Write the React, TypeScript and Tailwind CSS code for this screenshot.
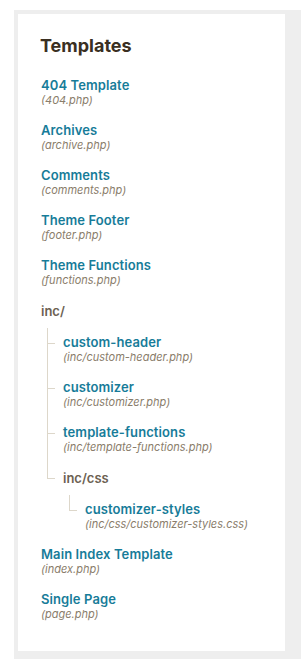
import React from "react";

type Node =
  | { kind: "file"; title: string; file: string }
  | { kind: "dir"; name: string; children: Node[] };

const tree: Node[] = [
  { kind: "file", title: "404 Template", file: "(404.php)" },
  { kind: "file", title: "Archives", file: "(archive.php)" },
  { kind: "file", title: "Comments", file: "(comments.php)" },
  { kind: "file", title: "Theme Footer", file: "(footer.php)" },
  { kind: "file", title: "Theme Functions", file: "(functions.php)" },
  {
    kind: "dir",
    name: "inc/",
    children: [
      { kind: "file", title: "custom-header", file: "(inc/custom-header.php)" },
      { kind: "file", title: "customizer", file: "(inc/customizer.php)" },
      { kind: "file", title: "template-functions", file: "(inc/template-functions.php)" },
      {
        kind: "dir",
        name: "inc/css",
        children: [
          {
            kind: "file",
            title: "customizer-styles",
            file: "(inc/css/customizer-styles.css)",
          },
        ],
      },
    ],
  },
  { kind: "file", title: "Main Index Template", file: "(index.php)" },
  { kind: "file", title: "Single Page", file: "(page.php)" },
];

function Entry({ node }: { node: Node }) {
  if (node.kind === "file") {
    return (
      <div className="flex flex-col">
        <a
          href="#"
          className="text-[13px] leading-[16px] font-semibold text-[#177c99] tracking-[0.1px]"
        >
          {node.title}
        </a>
        <span className="text-[11px] leading-[14px] italic text-[#8a7d6b]">
          {node.file}
        </span>
      </div>
    );
  }
  return (
    <div className="flex flex-col pt-[1px]">
      <span className="text-[13px] leading-[16px] font-semibold text-[#6c6152]">
        {node.name}
      </span>
      <ul className="ml-[6px] mt-[15px] flex flex-col gap-[15px]">
        {node.children.map((c, i) => (
          <li
            key={i}
            className={
              i === 0
                ? "relative pl-[16px] before:content-[''] before:absolute before:left-0 before:top-[-6px] before:h-[16px] before:w-[8px] before:border-l before:border-b before:border-[#ddd7ca]"
                : "relative pl-[16px] before:content-[''] before:absolute before:left-0 before:top-[-36px] before:h-[46px] before:w-[8px] before:border-l before:border-b before:border-[#ddd7ca]"
            }
          >
            <Entry node={c} />
          </li>
        ))}
      </ul>
    </div>
  );
}

export default function App() {
  return (
    <div
      className="bg-white pt-[10px] pl-[14px] pb-[4px]"
      style={{ fontFamily: "Inter, 'Noto Sans', sans-serif" }}
    >
      <div className="bg-[#eeeeee] pt-[4px] pl-[4px] pr-[16px] pb-[8px]">
        <div className="bg-white pt-[20px] pb-[30px] pl-[23px] pr-[10px]">
          <h2 className="text-[18px] leading-[24px] font-bold text-[#3a2f22] -ml-[1px]">
            Templates
          </h2>
          <ul className="mt-[19px] flex flex-col gap-[15px]">
            {tree.map((n, i) => (
              <li key={i}>
                <Entry node={n} />
              </li>
            ))}
          </ul>
        </div>
      </div>
    </div>
  );
}
